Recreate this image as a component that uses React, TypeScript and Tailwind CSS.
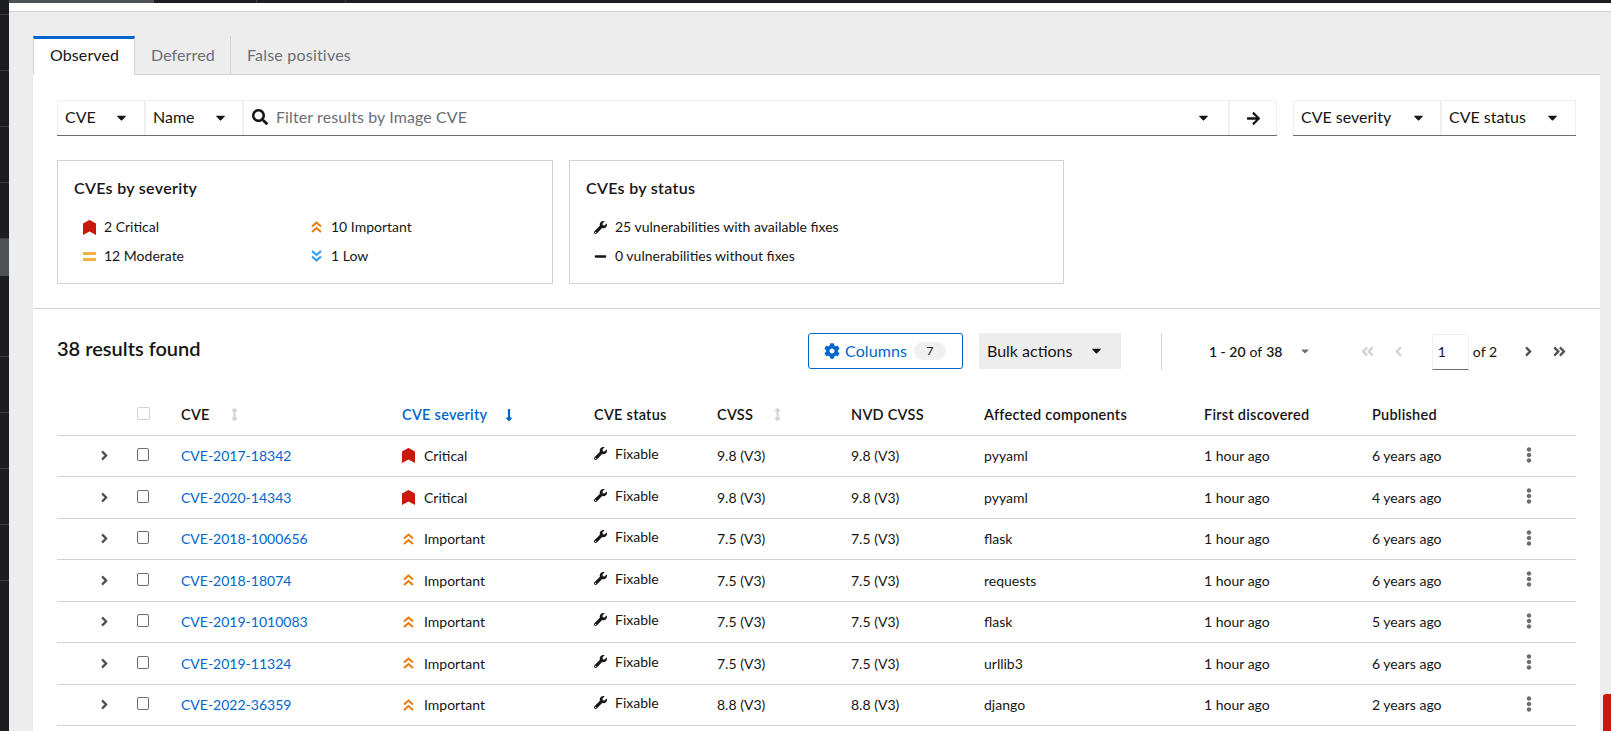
import React from "react";
import {
  FaWrench, FaCog, FaSearch, FaArrowRight, FaEllipsisV, FaCaretDown, FaAngleRight, FaAngleLeft,
  FaAngleDoubleLeft, FaAngleDoubleRight, FaMinus, FaArrowsAltV, FaLongArrowAltDown,
} from "react-icons/fa";

const Critical = () => (
  <svg width="13" height="15" viewBox="0 0 13 15" className="shrink-0">
    <path d="M0 3.6 L5.4 0.4 Q6.5 -0.2 7.6 0.4 L13 3.6 V15 L6.5 11.6 L0 15 Z" fill="#c9190b" />
  </svg>
);
const Important = () => (
  <svg width="11" height="12" viewBox="0 0 11 12" className="shrink-0" fill="none" stroke="#ec7a08" strokeWidth="2">
    <path d="M1 5.5 L5.5 1.5 L10 5.5" />
    <path d="M1 11 L5.5 7 L10 11" />
  </svg>
);
const Low = () => (
  <svg width="11" height="12" viewBox="0 0 11 12" className="shrink-0" fill="none" stroke="#2b9af3" strokeWidth="2">
    <path d="M1 1 L5.5 5 L10 1" />
    <path d="M1 6.5 L5.5 10.5 L10 6.5" />
  </svg>
);
const Moderate = () => (
  <span className="flex w-[13px] shrink-0 flex-col gap-[3px]">
    <span className="h-[3px] bg-[#f4b13f]" />
    <span className="h-[3px] bg-[#f4b13f]" />
  </span>
);

const Drop = ({ label, w, caretGap }: { label: string; w: string; caretGap: string }) => (
  <div className={`flex h-full ${w} items-center border border-b-0 border-[#f0f0f0] pb-[2px] pl-[7px] text-[#151515]`}>
    <span>{label}</span>
    <FaCaretDown className={`${caretGap} text-[15px]`} />
  </div>
);

const GRID = "grid grid-cols-[80px_44px_221px_192px_123px_134px_133px_220px_168px_148px_1fr] items-center";

type Row = { id: string; sev: "Critical" | "Important"; score: string; comp: string; pub: string };
const rows: Row[] = [
  { id: "CVE-2017-18342", sev: "Critical", score: "9.8 (V3)", comp: "pyyaml", pub: "6 years ago" },
  { id: "CVE-2020-14343", sev: "Critical", score: "9.8 (V3)", comp: "pyyaml", pub: "4 years ago" },
  { id: "CVE-2018-1000656", sev: "Important", score: "7.5 (V3)", comp: "flask", pub: "6 years ago" },
  { id: "CVE-2018-18074", sev: "Important", score: "7.5 (V3)", comp: "requests", pub: "6 years ago" },
  { id: "CVE-2019-1010083", sev: "Important", score: "7.5 (V3)", comp: "flask", pub: "5 years ago" },
  { id: "CVE-2019-11324", sev: "Important", score: "7.5 (V3)", comp: "urllib3", pub: "6 years ago" },
  { id: "CVE-2022-36359", sev: "Important", score: "8.8 (V3)", comp: "django", pub: "2 years ago" },
];

const segments = [15, 56, 56, 56, 56];

export default function App() {
  return (
    <div className="flex h-[731px] overflow-hidden bg-[#ededed] font-['Lato',sans-serif] text-[14px] text-[#151515]">
      <aside className="flex w-[9px] shrink-0 flex-col bg-[#1b1d21]">
        {segments.map((h, i) => (
          <div key={i} className={i === 0 ? "h-[15px] border-b border-[#3c3f42]" : "h-[56px] border-b border-[#3c3f42]"} />
        ))}
        <div className="h-[37px] bg-[#4f5255]" />
        <div className="h-[81px] border-b border-[#3c3f42]" />
        <div className="h-[56px] border-b border-[#3c3f42]" />
        <div className="h-[56px] border-b border-[#3c3f42]" />
        <div className="h-[56px] border-b border-[#3c3f42]" />
        <div className="h-[56px] border-b border-[#3c3f42]" />
      </aside>

      <div className="relative flex min-w-0 flex-1 flex-col">
        <div className="flex h-[3px] bg-[#1b1d21]">
          <div className="w-[145px] bg-[#4f5255]" />
          <div className="w-[103px] border-r border-[#3c3f42]" />
          <div className="w-[89px] border-r border-[#3c3f42]" />
        </div>
        <div className="h-[9px] border-b border-[#d2d2d2] bg-white" />

        <main className="flex flex-1 flex-col pl-[24px] pr-[11px] pt-[24px]">
          <nav className="flex h-[39px] text-[16px] leading-none">
            <div className="flex w-[102px] items-center border-x border-t-[3px] border-x-[#d2d2d2] border-t-[#06c] bg-white pb-[4px] pl-[16px] tracking-[0.1px]">Observed</div>
            <div className="flex w-[96px] items-center border-b border-r border-[#d2d2d2] pb-[1px] pl-[16px] text-[#6a6e73] tracking-[0.1px]">Deferred</div>
            <div className="flex w-[136px] items-center border-b border-[#d2d2d2] pb-[1px] pl-[16px] tracking-[0.2px] text-[#6a6e73]">False positives</div>
            <div className="flex-1 border-b border-[#d2d2d2]" />
          </nav>

          <section className="flex-1 bg-white pt-[25px]">
            <div className="flex h-[36px] px-[24px] text-[16px]">
              <div className="flex h-full border-b border-[#6a6e73]">
                <Drop label="CVE" w="w-[88px]" caretGap="ml-[18px]" />
                <Drop label="Name" w="w-[98px]" caretGap="ml-[18px]" />
                <div className="flex h-full w-[986px] items-center border border-b-0 border-[#f0f0f0] pb-[2px] pl-[8px]">
                  <FaSearch className="text-[16px] text-[#151515]" />
                  <span className="ml-[8px] tracking-[0.1px] text-[#6a6e73]">Filter results by Image CVE</span>
                  <FaCaretDown className="ml-auto mr-[17px] text-[15px]" />
                </div>
                <div className="flex h-full w-[48px] items-center justify-center border border-b-0 border-[#f0f0f0]">
                  <FaArrowRight className="text-[15px]" />
                </div>
              </div>
              <div className="ml-[16px] flex h-full border-b border-[#6a6e73]">
                <Drop label="CVE severity" w="w-[148px]" caretGap="ml-[20px]" />
                <Drop label="CVE status" w="w-[135px]" caretGap="ml-[19px]" />
              </div>
            </div>

            <div className="mt-[24px] flex gap-[16px] px-[24px]">
              <div className="h-[124px] w-[496px] border border-[#d2d2d2] pl-[16px] pt-[15px]">
                <h3 className="text-[16px] font-semibold leading-[24px] tracking-[0.3px]">CVEs by severity</h3>
                <div className="mt-[16px] grid grid-cols-[228px_1fr] gap-y-[7px] pl-[9px] leading-[22px]">
                  <div className="flex items-center gap-[8px]"><Critical />2 Critical</div>
                  <div className="flex items-center gap-[9px]"><Important />10 Important</div>
                  <div className="flex items-center gap-[8px]"><Moderate />12 Moderate</div>
                  <div className="flex items-center gap-[9px]"><Low />1 Low</div>
                </div>
              </div>
              <div className="h-[124px] w-[495px] border border-[#d2d2d2] pl-[16px] pt-[15px]">
                <h3 className="text-[16px] font-semibold leading-[24px] tracking-[0.3px]">CVEs by status</h3>
                <div className="mt-[16px] flex flex-col gap-[7px] pl-[8px] leading-[22px]">
                  <div className="flex items-center gap-[8px]"><FaWrench className="text-[13px]" />25 vulnerabilities with available fixes</div>
                  <div className="flex items-center gap-[8px]"><FaMinus className="text-[13px]" />0 vulnerabilities without fixes</div>
                </div>
              </div>
            </div>

            <div className="mt-[24px] flex h-[87px] items-start border-t border-[#d2d2d2] px-[24px] pt-[24px]">
              <div className="flex h-[30px] w-[751px] items-center text-[20px] font-semibold">38 results found</div>
              <button className="flex h-[36px] w-[155px] items-center rounded-[3px] border border-[#06c] pb-[1px] pl-[15px] text-[16px] text-[#06c]">
                <FaCog className="text-[16px]" />
                <span className="ml-[5px] tracking-[0.1px]">Columns</span>
                <span className="ml-[7px] flex h-[18px] w-[32px] items-center justify-center rounded-full bg-[#f0f0f0] text-[12px] text-[#151515]">7</span>
              </button>
              <div className="ml-[16px] flex h-[36px] w-[142px] items-center bg-[#ededed] pb-[1px] pl-[8px] text-[16px]">
                Bulk actions
                <FaCaretDown className="ml-[17px] text-[15px]" />
              </div>
              <div className="ml-[40px] h-[37px] w-px bg-[#d2d2d2]" />
              <div className="ml-[47px] flex h-[36px] items-center">
                <span className="font-semibold">1 - 20</span><span className="ml-[4px]">of</span><span className="ml-[4px] font-semibold">38</span>
                <FaCaretDown className="ml-[16px] text-[12px] text-[#6a6e73]" />
              </div>
              <div className="ml-auto mr-[9px] flex h-[37px] items-center">
                <FaAngleDoubleLeft className="text-[15px] text-[#d2d2d2]" />
                <FaAngleLeft className="ml-[16px] text-[15px] text-[#d2d2d2]" />
                <div className="ml-[26px] flex h-[36px] w-[37px] items-center border border-b-[#6a6e73] border-[#f0f0f0] pl-[5px]">1</div>
                <span className="ml-[4px]">of 2</span>
                <FaAngleRight className="ml-[24px] text-[15px] text-[#4f5255]" />
                <FaAngleDoubleRight className="ml-[16px] text-[15px] text-[#4f5255]" />
              </div>
            </div>

            <div className="mx-[24px]">
              <div className={`${GRID} h-[40.5px] border-b border-[#d2d2d2] text-[14.5px] font-semibold tracking-[0.25px]`}>
                <span />
                <span className="mb-[2px] h-[13px] w-[13px] rounded-[2px] border border-[#d2d2d2]" />
                <span className="flex items-center">CVE<FaArrowsAltV className="ml-[18px] text-[13px] text-[#d2d2d2]" /></span>
                <span className="flex items-center text-[#06c]">CVE severity<FaLongArrowAltDown className="ml-[15px] text-[14px]" /></span>
                <span>CVE status</span>
                <span className="flex items-center">CVSS<FaArrowsAltV className="ml-[18px] text-[13px] text-[#d2d2d2]" /></span>
                <span>NVD CVSS</span>
                <span>Affected components</span>
                <span>First discovered</span>
                <span>Published</span>
                <span />
              </div>
              {rows.map((r) => (
                <div key={r.id} className={`${GRID} h-[41.5px] border-b border-[#d2d2d2]`}>
                  <FaAngleRight className="ml-[40px] text-[15px] text-[#4f5255]" />
                  <span className="mb-[2px] h-[13px] w-[12px] rounded-[2px] border border-[#6a6e73]" />
                  <a className="text-[#06c]">{r.id}</a>
                  <span className="flex items-center">
                    {r.sev === "Critical" ? <Critical /> : <span className="flex w-[13px] justify-center"><Important /></span>}
                    <span className="ml-[9px]">{r.sev}</span>
                  </span>
                  <span className="mb-[4px] flex items-center"><FaWrench className="text-[13px]" /><span className="ml-[8px]">Fixable</span></span>
                  <span>{r.score}</span>
                  <span>{r.score}</span>
                  <span>{r.comp}</span>
                  <span>1 hour ago</span>
                  <span>{r.pub}</span>
                  <FaEllipsisV className="mb-[2px] ml-[1px] text-[16px] text-[#6a6e73]" />
                </div>
              ))}
            </div>
          </section>
        </main>

        <div className="absolute bottom-0 right-0 h-[37px] w-[8px] rounded-tl-[3px] bg-[#c9190b]" />
      </div>
    </div>
  );
}
